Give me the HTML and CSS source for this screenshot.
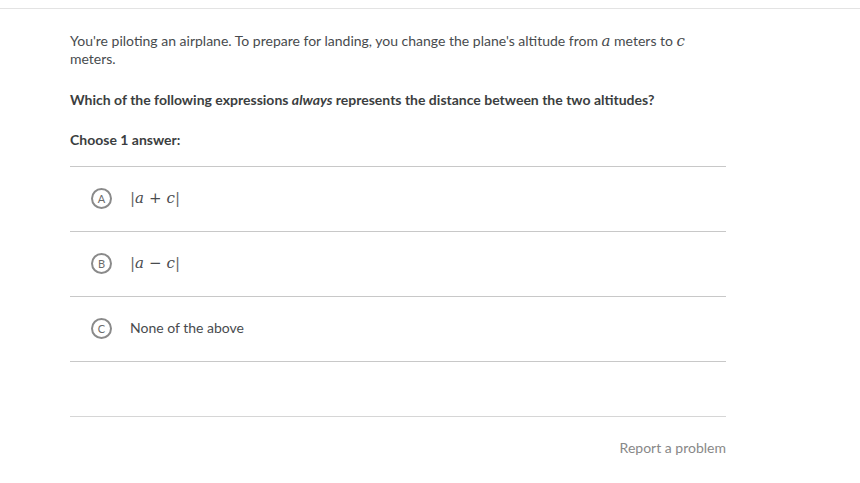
FILE: index.html
```html
<!DOCTYPE html>
<html>
<head>
<meta charset="utf-8">
<link rel="stylesheet" href="styles.css">
</head>
<body>
<div class="topbar"></div>
<main class="content">
  <p class="stem">You're piloting an airplane. To prepare for landing, you change the plane's altitude from <span class="math">a</span> meters to <span class="math">c</span> meters.</p>
  <p class="question">Which of the following expressions <em>always</em> represents the distance between the two altitudes?</p>
  <p class="choose">Choose 1 answer:</p>
  <ul class="choices">
    <li class="choice"><span class="letter">A</span><span class="expr"><span class="bar">|</span><span class="mi">a</span><span class="op">+</span><span class="mi">c</span><span class="bar">|</span></span></li>
    <li class="choice"><span class="letter">B</span><span class="expr"><span class="bar">|</span><span class="mi">a</span><span class="op">−</span><span class="mi">c</span><span class="bar">|</span></span></li>
    <li class="choice"><span class="letter">C</span><span class="label">None of the above</span></li>
  </ul>
  <div class="footer">
    <a class="report">Report a problem</a>
  </div>
</main>
</body>
</html>
```
FILE: styles.css
```css
html, body {
  margin: 0;
  padding: 0;
  background: #fff;
}
body {
  font-family: Lato, "Open Sans", sans-serif;
  color: #3b3e40;
  font-size: 14px;
}
.topbar {
  margin-top: 8px;
  border-top: 1px solid #e3e3e3;
}
.content {
  width: 656px;
  margin-left: 70px;
}
.stem {
  margin: 23px 0 0 0;
  line-height: 18px;
  color: #484b4e;
}
.math {
  font-family: "DejaVu Serif", "Liberation Serif", serif;
  font-style: italic;
  font-size: 15px;
}
.question {
  margin: 23px 0 0 0;
  font-weight: bold;
  line-height: 18px;
  color: #3b3e40;
}
.question em { font-style: italic; }
.choose {
  margin: 22px 0 0 0;
  font-weight: bold;
  line-height: 18px;
  color: #3b3e40;
}
.choices {
  list-style: none;
  margin: 17px 0 0 0;
  padding: 0;
  border-top: 1px solid #c8c8c8;
}
.choice {
  height: 64px;
  border-bottom: 1px solid #c8c8c8;
  display: flex;
  align-items: center;
  padding-left: 21px;
}
.letter {
  box-sizing: border-box;
  width: 21px;
  height: 21px;
  border: 2px solid #8a8a8a;
  border-radius: 50%;
  display: flex;
  align-items: center;
  justify-content: center;
  font-size: 11px;
  line-height: 1;
  font-weight: normal;
  color: #6b6b6b;
  margin-right: 18px;
  margin-bottom: 2px;
}
.expr {
  font-family: "DejaVu Serif", "Liberation Serif", serif;
  font-size: 15px;
  color: #484b4e;
  display: flex;
  align-items: center;
  margin-bottom: 2px;
}
.mi { font-style: italic; }
.op { margin: 0 5px; font-style: normal; }
.bar { color: #666; font-style: normal; }
.label {
  color: #484b4e;
  margin-bottom: 4px;
}
.footer {
  border-top: 1px solid #d6d6d6;
  margin-top: 54px;
  display: flex;
  justify-content: flex-end;
  padding-top: 22px;
}
.report {
  color: #888;
  font-size: 14px;
}
```
